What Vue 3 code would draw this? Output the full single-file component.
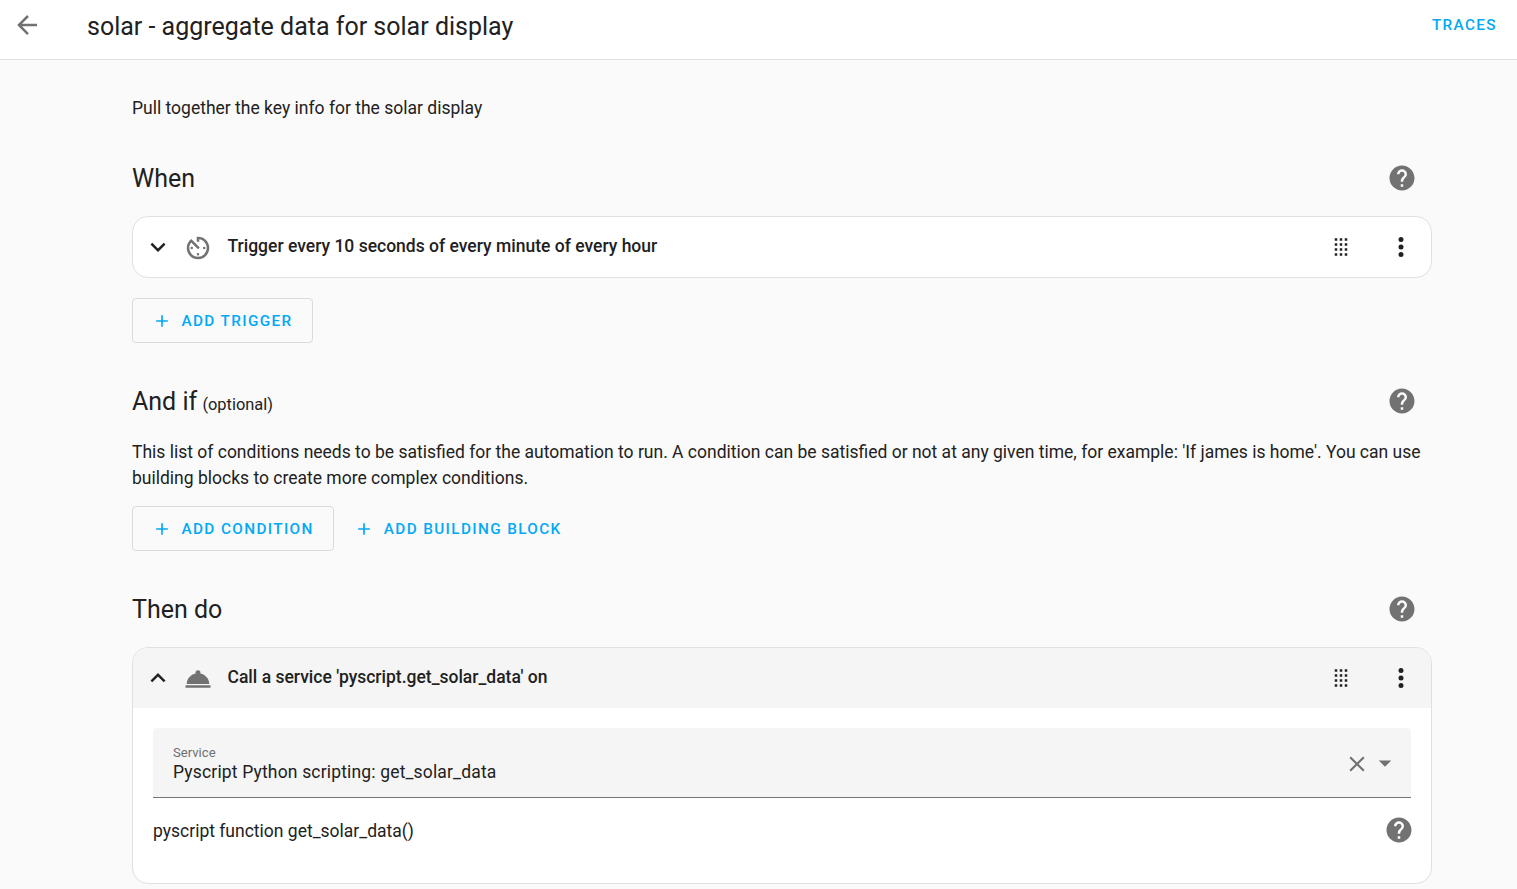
<script setup>
const mdi = {
  back: 'M20,11V13H8L13.5,18.5L12.08,19.92L4.16,12L12.08,4.08L13.5,5.5L8,11H20Z',
  help: 'M15.07,11.25L14.17,12.17C13.45,12.89 13,13.5 13,15H11V14.5C11,13.39 11.45,12.39 12.17,11.67L13.41,10.41C13.78,10.05 14,9.55 14,9A2,2 0 0,0 12,7A2,2 0 0,0 10,9H8A4,4 0 0,1 12,5A4,4 0 0,1 16,9C16,9.88 15.64,10.67 15.07,11.25M13,19H11V17H13M12,2A10,10 0 0,0 2,12A10,10 0 0,0 12,22A10,10 0 0,0 22,12C22,6.47 17.5,2 12,2Z',
  down: 'M7.41,8.58L12,13.17L16.59,8.58L18,10L12,16L6,10L7.41,8.58Z',
  up: 'M7.41,15.41L12,10.83L16.59,15.41L18,14L12,8L6,14L7.41,15.41Z',
  timer: 'M11,17A1,1 0 0,0 12,18A1,1 0 0,0 13,17A1,1 0 0,0 12,16A1,1 0 0,0 11,17M11,3V7H13V5.08C16.39,5.57 19,8.47 19,12A7,7 0 0,1 12,19A7,7 0 0,1 5,12C5,10.32 5.59,8.78 6.58,7.58L12,13L13.41,11.59L6.61,4.79V4.81C4.42,6.45 3,9.05 3,12A9,9 0 0,0 12,21A9,9 0 0,0 21,12A9,9 0 0,0 12,3M18,12A1,1 0 0,0 17,11A1,1 0 0,0 16,12A1,1 0 0,0 17,13A1,1 0 0,0 18,12M6,12A1,1 0 0,0 7,13A1,1 0 0,0 8,12A1,1 0 0,0 7,11A1,1 0 0,0 6,12Z',
  bell: 'M12,5A2,2 0 0,1 14,7C14,7.24 13.96,7.47 13.88,7.69C17.95,8.5 21,11.91 21,16H3C3,11.91 6.05,8.5 10.12,7.69C10.04,7.47 10,7.24 10,7A2,2 0 0,1 12,5M22,19H2V17H22V19Z',
  drag: 'M7,19V17H9V19H7M11,19V17H13V19H11M15,19V17H17V19H15M7,15V13H9V15H7M11,15V13H13V15H11M15,15V13H17V15H15M7,11V9H9V11H7M11,11V9H13V11H11M15,11V9H17V11H15M7,7V5H9V7H7M11,7V5H13V7H11M15,7V5H17V7H15Z',
  dots: 'M12,16A2,2 0 0,1 14,18A2,2 0 0,1 12,20A2,2 0 0,1 10,18A2,2 0 0,1 12,16M12,10A2,2 0 0,1 14,12A2,2 0 0,1 12,14A2,2 0 0,1 10,12A2,2 0 0,1 12,10M12,4A2,2 0 0,1 14,6A2,2 0 0,1 12,8A2,2 0 0,1 10,6A2,2 0 0,1 12,4Z',
  plus: 'M19,13H13V19H11V13H5V11H11V5H13V11H19V13Z',
  close: 'M19,6.41L17.59,5L12,10.59L6.41,5L5,6.41L10.59,12L5,17.59L6.41,19L12,13.41L17.59,19L19,17.59L13.41,12L19,6.41Z',
  menu: 'M7,10L12,15L17,10H7Z'
}
</script>

<template>
  <div class="page">
    <header class="topbar">
      <svg class="back" viewBox="0 0 24 24"><path :d="mdi.back" /></svg>
      <h1>solar - aggregate data for solar display</h1>
      <a class="traces">TRACES</a>
    </header>

    <main class="content">
      <p class="description">Pull together the key info for the solar display</p>

      <div class="section-head when">
        <h2>When</h2>
        <svg class="help" viewBox="0 0 24 24"><path :d="mdi.help" /></svg>
      </div>
      <div class="card">
        <div class="row">
          <svg class="chevron" viewBox="0 0 24 24"><path :d="mdi.down" /></svg>
          <svg class="type-icon" viewBox="0 0 24 24"><path :d="mdi.timer" /></svg>
          <span class="row-title">Trigger every 10 seconds of every minute of every hour</span>
          <svg class="drag" viewBox="0 0 24 24"><path :d="mdi.drag" /></svg>
          <svg class="dots" viewBox="0 0 24 24"><path :d="mdi.dots" /></svg>
        </div>
      </div>
      <div class="actions first">
        <button class="btn outlined">
          <svg viewBox="0 0 24 24"><path :d="mdi.plus" /></svg>ADD TRIGGER
        </button>
      </div>

      <div class="section-head and-if">
        <h2>And if <small>(optional)</small></h2>
        <svg class="help" viewBox="0 0 24 24"><path :d="mdi.help" /></svg>
      </div>
      <p class="hint">
        This list of conditions needs to be satisfied for the automation to run. A condition can be satisfied or not at any given time, for example: 'If james is home'. You can use building blocks to create more complex conditions.
      </p>
      <div class="actions second">
        <button class="btn outlined">
          <svg viewBox="0 0 24 24"><path :d="mdi.plus" /></svg>ADD CONDITION
        </button>
        <button class="btn">
          <svg viewBox="0 0 24 24"><path :d="mdi.plus" /></svg>ADD BUILDING BLOCK
        </button>
      </div>

      <div class="section-head then">
        <h2>Then do</h2>
        <svg class="help" viewBox="0 0 24 24"><path :d="mdi.help" /></svg>
      </div>
      <div class="card">
        <div class="row open">
          <svg class="chevron" viewBox="0 0 24 24"><path :d="mdi.up" /></svg>
          <svg class="type-icon" viewBox="0 0 24 24"><path :d="mdi.bell" /></svg>
          <span class="row-title">Call a service 'pyscript.get_solar_data' on</span>
          <svg class="drag" viewBox="0 0 24 24"><path :d="mdi.drag" /></svg>
          <svg class="dots" viewBox="0 0 24 24"><path :d="mdi.dots" /></svg>
        </div>
        <div class="card-body">
          <div class="field">
            <div class="field-text">
              <label>Service</label>
              <div class="value">Pyscript Python scripting: get_solar_data</div>
            </div>
            <svg class="clear" viewBox="0 0 24 24"><path :d="mdi.close" /></svg>
            <svg class="caret" viewBox="0 0 24 24"><path :d="mdi.menu" /></svg>
          </div>
          <div class="service-info">
            <span>pyscript function get_solar_data()</span>
            <svg class="help" viewBox="0 0 24 24"><path :d="mdi.help" /></svg>
          </div>
        </div>
      </div>
    </main>
  </div>
</template>

<style>
html,
body {
  margin: 0;
  height: 100%;
  overflow: hidden;
  background: #fafafa;
}
</style>

<style scoped>
.page {
  font-family: Roboto, "Liberation Sans", sans-serif;
  color: #212121;
  background: #fafafa;
  height: 889px;
  overflow: hidden;
}

svg {
  display: block;
  flex: none;
  fill: currentColor;
}

.topbar {
  height: 59px;
  display: flex;
  align-items: center;
  background: #fff;
  border-bottom: 1px solid #e0e0e0;
  padding: 0 20px 0 12px;
}

.back {
  width: 30px;
  height: 30px;
  color: #727272;
  margin-top: -9px;
}

.topbar h1 {
  flex: 1;
  margin: -6px 0 0 45px;
  font-size: 25px;
  font-weight: 400;
  line-height: 32px;
}

.traces {
  color: #03a9f4;
  font-size: 15.3px;
  font-weight: 500;
  letter-spacing: 1.37px;
  margin-top: -10px;
}

.content {
  padding: 0 85px 0 132px;
}

.description {
  margin: 0;
  padding-top: 35px;
  font-size: 17.5px;
  line-height: 26px;
}

.section-head {
  display: flex;
  align-items: center;
  justify-content: space-between;
  height: 40px;
  padding-right: 15px;
}

.section-head h2 {
  margin: 0;
  font-size: 25px;
  font-weight: 400;
}

.section-head small {
  font-size: 16.4px;
  margin-left: -1px;
}

.help {
  width: 30px;
  height: 30px;
  color: #727272;
}

.when {
  margin-top: 37px;
  margin-bottom: 18px;
}

.and-if {
  margin-top: 38px;
}

.then {
  margin-top: 38px;
  margin-bottom: 18px;
}

.card {
  background: #fff;
  border: 1px solid #e0e0e0;
  border-radius: 16px;
  overflow: hidden;
}

.row {
  height: 60px;
  display: flex;
  align-items: center;
  padding: 0 15px 0 10px;
}

.row.open {
  background: #f5f5f5;
}

.chevron {
  width: 30px;
  height: 30px;
}

.type-icon {
  color: #727272;
  width: 30px;
  height: 30px;
  margin: 2px 14.5px 0 10px;
}

.row-title {
  flex: 1;
  font-size: 17.5px;
  font-weight: 500;
  margin-top: -3px;
}

.drag {
  width: 30px;
  height: 30px;
  margin-right: 30px;
}

.dots {
  width: 30px;
  height: 30px;
}

.actions {
  display: flex;
}

.actions.first {
  margin-top: 20px;
}

.actions.second {
  margin-top: 16px;
}

.btn {
  display: flex;
  align-items: center;
  height: 45px;
  padding: 0 19.5px 0 18.5px;
  border: 1px solid transparent;
  border-radius: 4px;
  background: none;
  color: #03a9f4;
  font-family: inherit;
  font-size: 15.3px;
  font-weight: 500;
  letter-spacing: 1.37px;
}

.btn.outlined {
  border-color: #dadada;
}

.btn svg {
  width: 20px;
  height: 20px;
  margin-right: 10px;
}

.hint {
  margin: 19px 0 -1px;
  font-size: 17.5px;
  line-height: 25.5px;
}

.card-body {
  box-sizing: border-box;
  padding: 20px 20px 0;
  height: 175px;
}

.field {
  height: 69px;
  display: flex;
  align-items: center;
  background: #f5f5f5;
  border-bottom: 1px solid #757575;
  border-radius: 4px 4px 0 0;
  padding: 0 11px 0 20px;
}

.field-text {
  flex: 1;
  padding-top: 3px;
}

.field label {
  display: block;
  font-size: 13.1px;
  line-height: 16px;
  color: #6f6f6f;
}

.value {
  font-size: 17.5px;
  letter-spacing: 0.164px;
  line-height: 22px;
}

.clear {
  width: 26px;
  height: 26px;
  color: #727272;
  margin-top: 2px;
}

.caret {
  width: 30px;
  height: 30px;
  color: #727272;
}

.service-info {
  display: flex;
  align-items: center;
  justify-content: space-between;
  padding-top: 17px;
  font-size: 17.5px;
  margin-right: -3px;
}

.service-info span {
  margin-top: 2px;
}
</style>
